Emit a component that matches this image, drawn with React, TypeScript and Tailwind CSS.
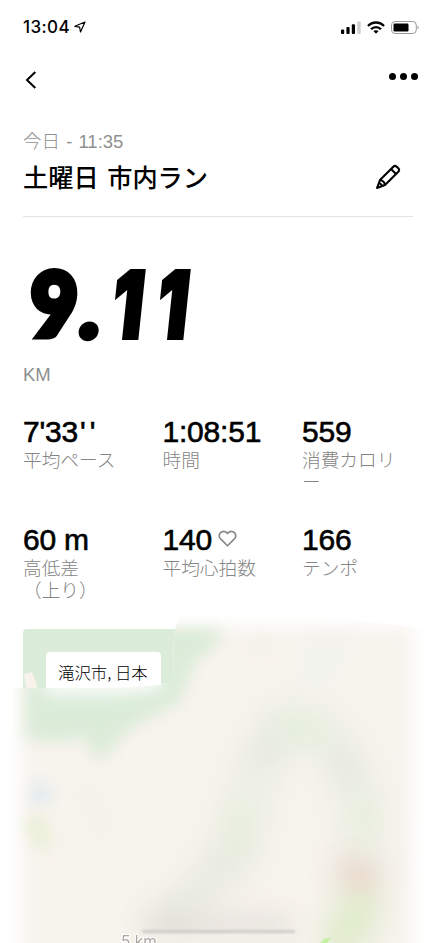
import { FiHeart } from "react-icons/fi";

const stats = [
  { id: 1, value: "7'33", suffix: "''", label: ["平均ペース"] },
  { id: 2, value: "1:08:51", label: ["時間"] },
  { id: 3, value: "559", label: ["消費カロリ", "ー"] },
  { id: 4, value: "60 m", label: ["高低差", "（上り）"] },
  { id: 5, value: "140", label: ["平均心拍数"], heart: true },
  { id: 6, value: "166", label: ["テンポ"] },
];

function StatusBar() {
  return (
    <div className="flex h-[54px] items-center pl-[23px] pr-[17px]">
      <span className="w-[47px] whitespace-nowrap font-['Inter',sans-serif] text-[17px] font-medium leading-5 tracking-[0.4px]">
        13:04
      </span>
      <svg className="ml-[4px] h-3 w-3" viewBox="0 0 12 12" fill="none">
        <path d="M11 1 L0.8 5.3 L5.6 6.1 L6.5 11 Z" stroke="black" strokeWidth="1.2" strokeLinejoin="round" />
      </svg>
      <div className="ml-auto flex items-center gap-[6px]">
        <svg className="h-[13px] w-5" viewBox="0 0 20 13">
          <rect x="0" y="8.5" width="3.2" height="4.5" rx="1" />
          <rect x="5.4" y="6" width="3.2" height="7" rx="1" />
          <rect x="10.8" y="3.3" width="3.2" height="9.7" rx="1" />
          <rect x="16.3" y="0.5" width="3.4" height="12.5" rx="1" fill="#cfcfcf" />
        </svg>
        <svg className="h-[13px] w-[18px]" viewBox="0 0 18 13" fill="none" stroke="black" strokeWidth="2.3">
          <path d="M1 5.1 C5.3 0.3 12.7 0.3 17 5.1" />
          <path d="M4 8.3 C6.8 5.4 11.2 5.4 14 8.3" />
          <path d="M6.4 10.1 C7.9 8.8 10.1 8.8 11.6 10.1 L9 12.8 Z" fill="black" stroke="none" />
        </svg>
        <svg className="h-[13px] w-7" viewBox="0 0 28 13">
          <rect x="0.5" y="0.5" width="24.8" height="12" rx="3.6" fill="none" stroke="#999" />
          <rect x="2.5" y="2.5" width="15" height="8" rx="1.2" />
          <path d="M26.6 4.5 Q28.6 6.5 26.6 8.5 Z" fill="#888" />
        </svg>
      </div>
    </div>
  );
}

function RouteMap() {
  return (
    <svg className="block h-[333px] w-[436px]" viewBox="0 0 436 333">
      <defs>
        <filter id="soft" x="-20%" y="-20%" width="140%" height="140%">
          <feGaussianBlur stdDeviation="7.5" />
        </filter>
        <filter id="softer" x="-50%" y="-50%" width="200%" height="200%">
          <feGaussianBlur stdDeviation="14" />
        </filter>
        <filter id="slight" x="-20%" y="-100%" width="140%" height="300%">
          <feGaussianBlur stdDeviation="1" />
        </filter>
        <clipPath id="corner">
          <path d="M23 78 V23 Q23 19 27 19 H178 V78 Z" />
        </clipPath>
        <clipPath id="area">
          <path d="M5 78 H115 L173 73 L174 25 Q177 8 185 0 H290 Q340 10 436 19 V333 H5 Z" />
        </clipPath>
      </defs>

      <g clipPath="url(#corner)">
        <rect x="23" y="19" width="155" height="59" fill="#dcecda" />
        <path d="M24 64 L32 62 L37 75 V78 H26 Z" fill="#f7f2ea" />
      </g>

      <g clipPath="url(#area)">
        <rect x="5" y="0" width="431" height="333" fill="white" />
        <rect x="22" y="17" width="390" height="350" fill="#f7f3ed" filter="url(#soft)" />
        <g filter="url(#soft)">
          <path d="M25 70 L150 60 V19 H222 Q216 43 195 50 L180 92 L145 110 Q124 122 112 138 L99 153 L82 126 L66 132 L25 130 Z" fill="#dbecd9" />
          <circle cx="41" cy="184" r="10" fill="#dbe9ef" />
          <ellipse cx="39" cy="222" rx="11" ry="20" fill="#eaf0d8" transform="rotate(-25 39 222)" />
          <circle cx="89" cy="187" r="9" fill="#f0f1e4" />
          <circle cx="101" cy="213" r="9" fill="#f0f1e5" />
          <ellipse cx="263" cy="38" rx="12" ry="6" fill="#f2f2e3" />
          <path d="M301 30 H360 L342 58 L322 82 L298 78 Z" fill="#f3f3ed" />
          <path d="M46 58 H160 V80 L115 84 H46 Z" fill="white" opacity="0.85" />
        </g>
        <g filter="url(#softer)" fill="none" strokeLinecap="round" strokeLinejoin="round">
          <path d="M232 250 L250 190 Q260 140 286 114 Q326 112 347 158 Q366 200 360 270 L350 320" stroke="#eef0e6" strokeWidth="52" />
          <path d="M160 316 L206 274 L238 232" stroke="#e9ebe1" strokeWidth="40" />
          <path d="M258 146 L276 130 M336 146 L352 166" stroke="#e4e7e0" strokeWidth="20" />
          <path d="M285 112 L318 124" stroke="#e3efdc" strokeWidth="24" />
          <path d="M236 200 L240 235 M364 195 L366 220" stroke="#e6eedb" strokeWidth="24" />
        </g>
        <g filter="url(#softer)" fill="none" strokeLinecap="round">
          <path d="M340 333 L362 296" stroke="#dfebc8" strokeWidth="34" />
          <path d="M352 262 L364 268" stroke="#ebcfc4" strokeWidth="26" />
          <path d="M160 318 L284 316" stroke="#d6d2cd" strokeWidth="16" opacity="0.8" />
        </g>
        <path d="M320 333 L325 328 H331 L327 333 Z" fill="#b9ee8e" opacity="0.7" />
        <rect x="124" y="324" width="180" height="14" fill="#f3f0e9" opacity="0.8" filter="url(#slight)" />
        <rect x="142" y="320" width="153" height="3" rx="1.5" fill="#c9c6c2" opacity="0.8" filter="url(#slight)" />
        <text x="121" y="337" fontFamily="Inter, sans-serif" fontSize="15.5" fill="#a9a7a2" stroke="white" strokeWidth="2" paintOrder="stroke">
          5 km
        </text>
      </g>
    </svg>
  );
}

function Distance() {
  return (
    <svg className="h-[147px] w-[200px] overflow-visible" viewBox="0 0 200 147" fontWeight="900" stroke="black">
      <text
        transform="translate(8 119.3) scale(0.92 1)"
        fontFamily="Lato, sans-serif"
        fontSize="88"
        strokeWidth="7"
      >
        9
      </text>
      <text transform="translate(54 120.5) skewX(-6)" fontFamily="Lato, sans-serif" fontSize="92" strokeWidth="5">
        .
      </text>
      <text transform="translate(86.5 120.5) skewX(-6) scale(0.74 1)" fontFamily="Inter, sans-serif" fontSize="92" strokeWidth="4">
        1
      </text>
      <text transform="translate(131.5 120.5) skewX(-6) scale(0.74 1)" fontFamily="Inter, sans-serif" fontSize="92" strokeWidth="4">
        1
      </text>
    </svg>
  );
}

export default function App() {
  return (
    <div className="flex h-[943px] w-[436px] flex-col overflow-hidden bg-white font-['Liberation_Sans','Noto_Sans_CJK_JP',sans-serif] text-black">
      <StatusBar />

      {/* Nav */}
      <div className="flex h-[52px] items-center justify-between pl-[25px] pr-[18px]">
        <button>
          <svg className="h-[18px] w-3" viewBox="0 0 12 18" fill="none">
            <path d="M10.3 1 L2 9 L10.3 17" stroke="black" strokeWidth="2" />
          </svg>
        </button>
        <button className="mb-[7px] flex gap-[4px]">
          <span className="h-[7px] w-[7px] rounded-full bg-black" />
          <span className="h-[7px] w-[7px] rounded-full bg-black" />
          <span className="h-[7px] w-[7px] rounded-full bg-black" />
        </button>
      </div>

      {/* Title */}
      <div className="mx-[23px] h-[111px] border-b-[1.5px] border-[#e2e2e2] pt-[25px]">
        <p className="text-[18.5px] font-light leading-[22px] text-[#8f8f8f] [word-spacing:1px]">今日 - 11:35</p>
        <div className="flex items-center justify-between pr-[12px]">
          <h1 className="whitespace-nowrap pt-[4px] font-['Noto_Sans_CJK_JP',sans-serif] text-[25.2px] font-medium leading-[38px] [word-spacing:3px]">
            土曜日 市内ラン
          </h1>
          <svg className="mt-[5px] h-[26px] w-[26px]" viewBox="0 0 26 26" fill="none" stroke="black" strokeWidth="2.1" strokeLinejoin="round">
            <path d="M2 24 L5 16 L18.3 2.7 Q20 1 21.7 2.7 L23.3 4.3 Q25 6 23.3 7.7 L10 21 Z" />
            <path d="M16 5 L21 10 M5 16 C8 16.5 9.5 18 10 21 M4.2 18.7 L7.3 21.8" />
          </svg>
        </div>
      </div>

      {/* Distance */}
      <div className="h-[196px] px-[23px]">
        <Distance />
        <p className="text-[18.5px] leading-[22px] text-[#8f8f8f]">KM</p>
      </div>

      {/* Stats */}
      <div className="grid h-[197px] shrink-0 grid-cols-[139.5px_139.5px_1fr] grid-rows-[108px_1fr] pl-[23px]">
        {stats.map((stat) => (
          <div key={stat.id}>
            <div className="flex h-[37px] items-center whitespace-nowrap text-[30px] leading-[37px] tracking-[-0.2px] [-webkit-text-stroke:0.6px_black]">
              {stat.value}
              {stat.suffix && <span className="ml-[2px] tracking-[4px]">{stat.suffix}</span>}
              {stat.heart && <FiHeart className="mb-[2px] ml-[6px] h-[19px] w-[19px] text-[#858585]" />}
            </div>
            <p className="-mt-[2px] whitespace-nowrap font-['Noto_Sans_CJK_JP',sans-serif] text-[18.7px] font-light leading-[21.5px] text-[#858585]">
              {stat.label.map((line) => (
                <span key={line} className="block">
                  {line}
                </span>
              ))}
            </p>
          </div>
        ))}
      </div>

      {/* Map */}
      <div className="relative h-[333px] shrink-0">
        <RouteMap />
        <div className="absolute left-[46px] top-[42px] h-[36px] w-[115px] whitespace-nowrap rounded-t-[4px] bg-white pl-[12px] pt-[9px] font-['Noto_Sans_CJK_JP',sans-serif] text-[16.4px] font-light leading-[22px] [clip-path:polygon(0_0,100%_0,100%_33px,60%_36px,0_36px)]">
          滝沢市, 日本
        </div>
      </div>
    </div>
  );
}
